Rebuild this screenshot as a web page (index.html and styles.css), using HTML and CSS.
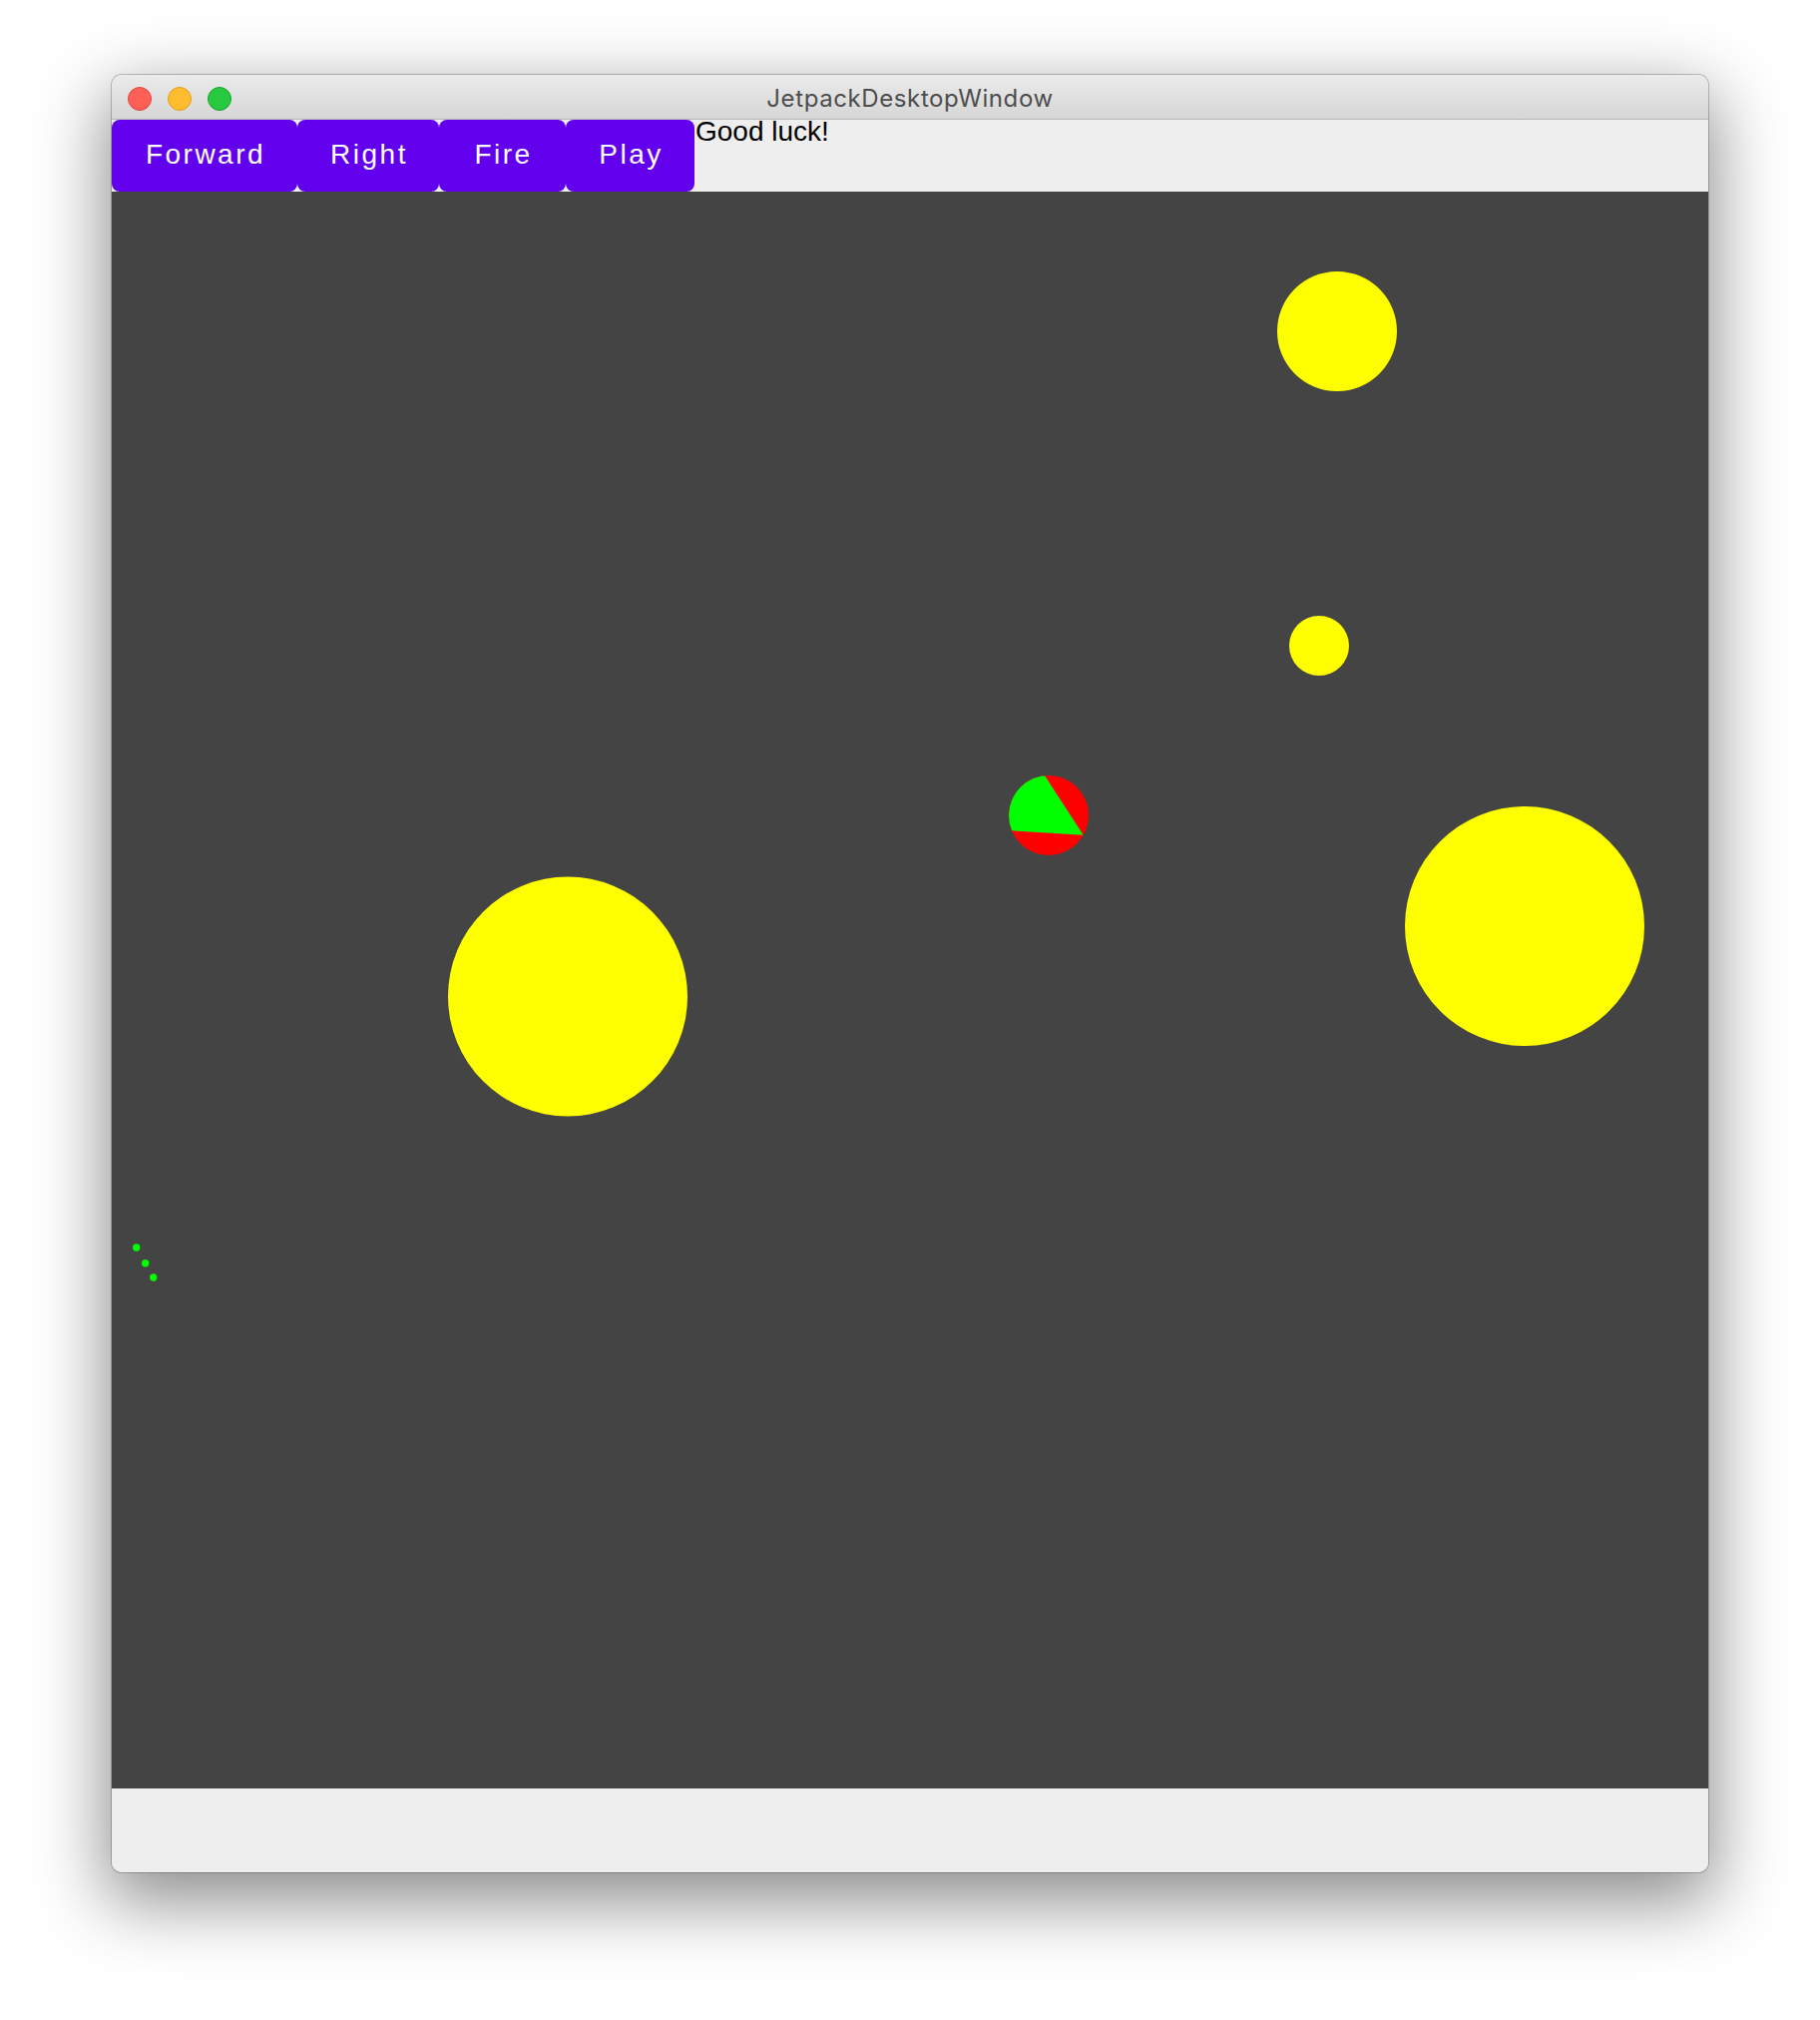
FILE: index.html
```html
<!DOCTYPE html>
<html>
<head>
<meta charset="utf-8">
<title>JetpackDesktopWindow</title>
<link rel="stylesheet" href="styles.css">
</head>
<body>
<div class="window">
  <div class="titlebar">
    <div class="lights">
      <span class="light red"></span>
      <span class="light yellow"></span>
      <span class="light green"></span>
    </div>
    <div class="title">JetpackDesktopWindow</div>
    <div></div>
  </div>
  <div class="toolbar">
    <button class="btn btn-forward">Forward</button>
    <button class="btn btn-right">Right</button>
    <button class="btn btn-fire">Fire</button>
    <button class="btn btn-play">Play</button>
    <span class="status">Good luck!</span>
  </div>
  <svg class="canvas" width="1600" height="1600" viewBox="0 0 1600 1600" xmlns="http://www.w3.org/2000/svg">
    <defs>
      <clipPath id="shipClip">
        <circle cx="939" cy="625" r="40"/>
      </clipPath>
    </defs>
    <circle cx="1228" cy="140" r="60" fill="#ffff00"/>
    <circle cx="1210" cy="455" r="30" fill="#ffff00"/>
    <circle cx="457" cy="806.5" r="120" fill="#ffff00"/>
    <circle cx="1416" cy="736" r="120" fill="#ffff00"/>
    <circle cx="939" cy="625" r="40" fill="#ff0000"/>
    <polygon clip-path="url(#shipClip)" fill="#00ff00" points="921.7,564.7 973.7,644.7 902,640.3 866,638 866,564.7"/>
    <circle cx="24.7" cy="1058" r="3.7" fill="#00ff00"/>
    <circle cx="33.7" cy="1073.7" r="3.7" fill="#00ff00"/>
    <circle cx="41.7" cy="1088" r="3.7" fill="#00ff00"/>
  </svg>
  <div class="footer"></div>
</div>
</body>
</html>
```
FILE: styles.css
```css
html, body {
  margin: 0;
  padding: 0;
  background: #ffffff;
}

body {
  padding: 75px 0 148px 112px;
  font-family: "Liberation Sans", Arial, sans-serif;
}

.window {
  width: 1600px;
  border-radius: 10px;
  overflow: hidden;
  background: #eeeeee;
  box-shadow: 0 0 0 1px rgba(0, 0, 0, 0.22), 0 24px 70px 6px rgba(0, 0, 0, 0.45);
}

.titlebar {
  height: 44px;
  border-bottom: 1px solid #b9b9b9;
  background: linear-gradient(#ebebeb, #d6d6d6);
  display: grid;
  grid-template-columns: 1fr auto 1fr;
  align-items: center;
}

.lights {
  display: flex;
  gap: 16px;
  padding-left: 16px;
  padding-top: 1px;
}

.light {
  width: 22px;
  height: 22px;
  border-radius: 50%;
  border: 1px solid;
}

.light.red { background: #fe5f57; border-color: #e2463f; }
.light.yellow { background: #febc2e; border-color: #e1a116; }
.light.green { background: #28c840; border-color: #17a52b; }

.title {
  font-family: Inter, "Liberation Sans", sans-serif;
  font-size: 24px;
  letter-spacing: 0.6px;
  line-height: 44px;
  padding-top: 2px;
  color: #4d4d4d;
}

.toolbar {
  height: 72px;
  display: flex;
  align-items: flex-start;
  background: #eeeeee;
}

.btn {
  height: 72px;
  border: 0;
  margin: 0;
  padding: 0 0 2px 2px;
  border-radius: 8px;
  background: #6200ee;
  color: #ffffff;
  font-family: "Liberation Sans", Arial, sans-serif;
  font-size: 28px;
  letter-spacing: 2.5px;
  display: flex;
  align-items: center;
  justify-content: center;
}

.btn-forward { width: 186px; }
.btn-right { width: 142px; }
.btn-fire { width: 127px; }
.btn-play { width: 129px; }

.status {
  font-size: 28px;
  line-height: 24px;
  padding-left: 1px;
  color: #000000;
}

.canvas {
  display: block;
  background: #444444;
}

.footer {
  height: 84px;
  background: #eeeeee;
}
```
